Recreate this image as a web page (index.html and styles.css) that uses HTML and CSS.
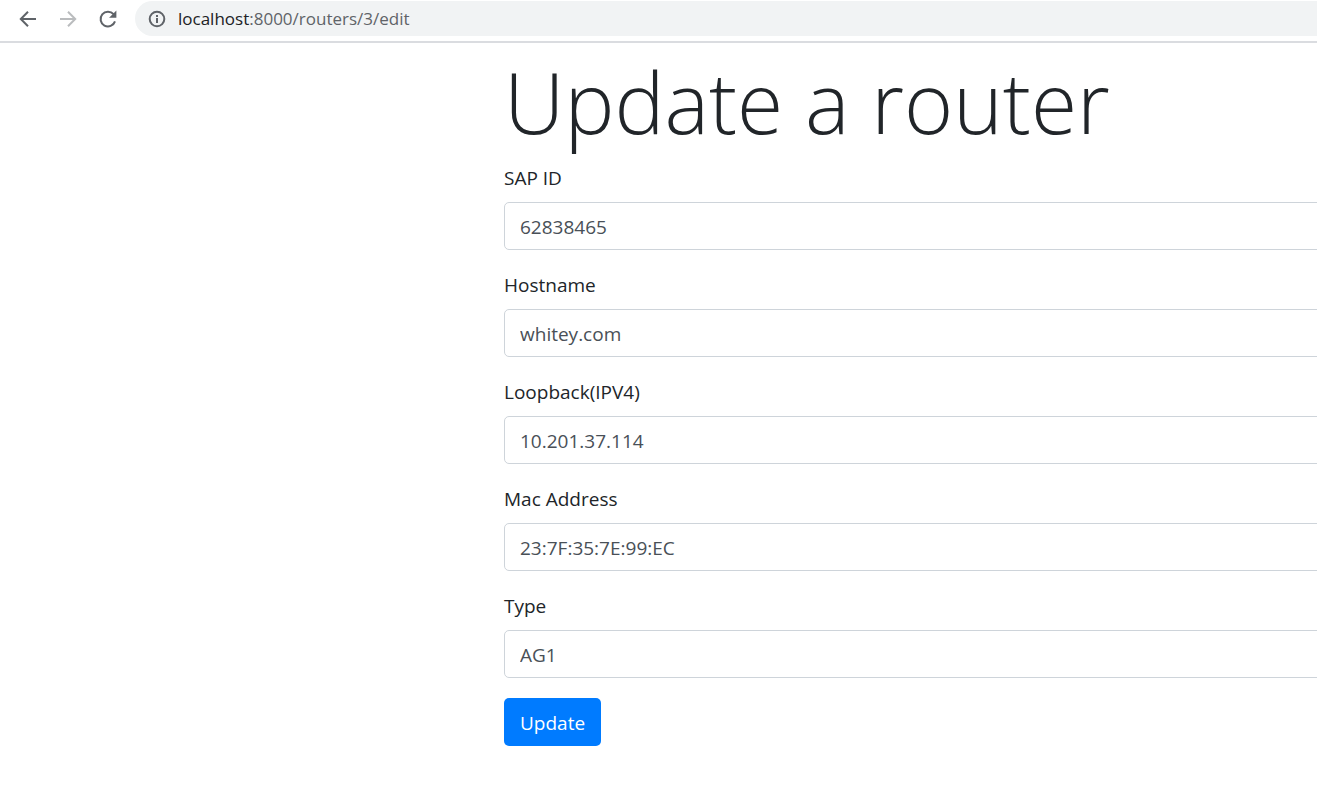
FILE: index.html
```html
<!DOCTYPE html>
<html lang="en">
<head>
<meta charset="utf-8">
<title>Update a router</title>
<link rel="stylesheet" href="styles.css">
</head>
<body>
<header class="toolbar">
  <button class="nav-button" type="button" aria-label="Back">
    <svg viewBox="0 0 20 20" width="20" height="20"><path d="M18 10H3M10 2.8L2.8 10l7.200 7.200"/></svg>
  </button>
  <button class="nav-button nav-button-off" type="button" aria-label="Forward" disabled>
    <svg viewBox="0 0 20 20" width="20" height="20"><path d="M2 10h15M10 2.800L17.200 10 10 17.200"/></svg>
  </button>
  <button class="nav-button" type="button" aria-label="Reload">
    <svg viewBox="0 0 20 20" width="20" height="20"><path d="M15.600 5.200A7.400 7.400 0 1 0 17 12.400"/><path class="solid" d="M18.400 1.500v7.300h-7.300z"/></svg>
  </button>
  <div class="address">
    <svg class="info" viewBox="0 0 18 18" width="18" height="18"><circle cx="9" cy="9" r="7.300"/><path d="M9 8v5M9 5v2"/></svg>
    <div class="url" role="textbox" aria-label="Address"><span class="host">localhost</span>:8000/routers/3/edit</div>
  </div>
</header>
<main class="page">
  <h1 class="title">Update a router</h1>
  <form class="form">
    <div class="field">
      <label for="sap">SAP ID</label>
      <input id="sap" type="text" value="62838465">
    </div>
    <div class="field">
      <label for="host">Hostname</label>
      <input id="host" type="text" value="whitey.com">
    </div>
    <div class="field">
      <label for="loopback">Loopback(IPV4)</label>
      <input id="loopback" type="text" value="10.201.37.114">
    </div>
    <div class="field">
      <label for="mac">Mac Address</label>
      <input id="mac" type="text" value="23:7F:35:7E:99:EC">
    </div>
    <div class="field">
      <label for="type">Type</label>
      <input id="type" type="text" value="AG1">
    </div>
    <button class="submit" type="submit">Update</button>
  </form>
</main>
</body>
</html>
```
FILE: styles.css
```css
* {
  box-sizing: border-box;
}

body {
  margin: 0;
  overflow-x: hidden;
  background: #fff;
  color: #212529;
  font-family: "Open Sans", "Noto Sans", sans-serif;
  font-size: 19px;
  line-height: 30px;
}

.toolbar {
  display: flex;
  align-items: center;
  padding: 1px 0 5px 8px;
  border-bottom: 2px solid #dadce0;
}

.nav-button {
  display: flex;
  align-items: center;
  justify-content: center;
  width: 40px;
  height: 35px;
  padding: 0;
  border: 0;
  background: none;
  color: #5f6368;
}

.nav-button-off {
  color: #babcbe;
}

svg {
  fill: none;
  stroke: currentColor;
  stroke-width: 2;
}

.solid {
  fill: currentColor;
  stroke: none;
}

.address {
  display: flex;
  flex: 1;
  align-items: center;
  gap: 12px;
  height: 35px;
  margin-left: 7px;
  padding-left: 13px;
  border-radius: 18px 0 0 18px;
  background: #f1f3f4;
  color: #5f6368;
}

.url {
  font-size: 17px;
}

.host {
  color: #202124;
}

.page {
  margin-right: -20px;
  padding: 8px 0 32px 504px;
}

.title {
  margin: 0 0 10px;
  font-size: 84px;
  font-weight: 300;
  line-height: 102px;
  white-space: nowrap;
}

.form {
  display: flex;
  flex-direction: column;
  align-items: flex-start;
  gap: 20px;
}

.field {
  display: flex;
  flex-direction: column;
  gap: 9px;
  width: 100%;
}

.field input {
  width: 100%;
  height: 48px;
  padding: 2px 15px 0;
  border: 1px solid #ced4da;
  border-radius: 5px;
  background: #fff;
  color: #495057;
  font: inherit;
}

.submit {
  height: 48px;
  padding: 1px 16px 0;
  border: 0;
  border-radius: 5px;
  background: #007bff;
  color: #fff;
  font: inherit;
}
```
